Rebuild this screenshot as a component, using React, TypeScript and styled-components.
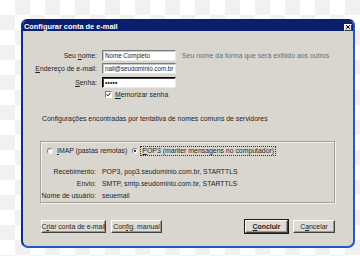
import React from 'react'
import styled, { createGlobalStyle } from 'styled-components'

const GlobalStyle = createGlobalStyle`
body {
  margin: 0;
  background-color: #ffffff;
  background-image: conic-gradient(#f1f1f1 25%, #ffffff 0 50%, #f1f1f1 0 75%, #ffffff 0);
  background-size: 30px 30px;
  font-family: "Liberation Sans", Arial, sans-serif;
}
#root {
  width: 360px;
  height: 256px;
  overflow: hidden;
}
`

const Page = styled.div`
width: 360px;
height: 256px;
padding: 19px 0 0 21px;
box-sizing: border-box;
`

const Window = styled.div`
width: 334px;
height: 229px;
box-sizing: border-box;
border: 2px solid #2358c8;
border-left-color: #0e2f86;
border-top-color: #0a1f6e;
border-radius: 6px 6px 7px 7px;
background: #d9d6cf;
display: flex;
flex-direction: column;
overflow: hidden;
`

const TitleBar = styled.div`
height: 10px;
background: #0a1f6e;
display: flex;
align-items: center;
justify-content: space-between;
padding: 0 1px 0 1px;
`

const Title = styled.span`
color: #ffffff;
font-weight: bold;
font-size: 7.4px;
`

const CloseButton = styled.div`
width: 8px;
height: 7px;
background: #d9d6cf;
border: 1px solid #ffffff;
border-right-color: #404040;
border-bottom-color: #404040;
box-sizing: border-box;
display: flex;
align-items: center;
justify-content: center;
margin-top: 2px;
`

const Body = styled.div`
flex: 1;
padding: 18.5px 18px 0 17px;
font-size: 6.9px;
color: #1e1e1e;
display: flex;
flex-direction: column;
`

const FormGrid = styled.div`
display: grid;
grid-template-columns: 57px 74px auto;
grid-template-rows: 11px 11px 11px 8px;
column-gap: 5px;
row-gap: 2.5px;
align-items: center;
`

const Label = styled.label`
display: flex;
justify-content: flex-end;
white-space: pre;
`

const Input = styled.div<{ focused?: boolean }>`
height: 11px;
box-sizing: border-box;
background: #ffffff;
border: 1px solid ${p => (p.focused ? '#000000' : '#7a7a7a')};
border-right-color: #e8e8e8;
border-bottom-color: #e8e8e8;
box-shadow: inset 1px 1px 0 ${p => (p.focused ? '#404040' : '#c8c8c8')};
padding: 0 1px 0 2px;
font-size: 6.3px;
letter-spacing: -0.05px;
display: flex;
align-items: center;
white-space: nowrap;
overflow: hidden;
`

const Dots = styled.span`
font-size: 6.5px;
letter-spacing: 0.2px;
font-weight: bold;
`

const Hint = styled.span`
color: #6c6c6c;
white-space: nowrap;
margin-left: 1px;
`

const CheckRow = styled.div`
grid-column: 2 / span 2;
display: flex;
align-items: center;
gap: 3px;
padding-left: 3px;
white-space: nowrap;
`

const CheckBox = styled.span`
width: 7px;
height: 7px;
box-sizing: border-box;
background: #ffffff;
border: 1px solid #7a7a7a;
border-right-color: #ffffff;
border-bottom-color: #ffffff;
display: flex;
align-items: center;
justify-content: center;
`

const Notice = styled.div`
margin: 17px 0 0 2px;
white-space: nowrap;
line-height: 8px;
`

const GroupBox = styled.div`
margin-top: 18px;
height: 62px;
box-sizing: border-box;
border: 1px solid #a3a09a;
box-shadow: inset 1px 1px 0 #f4f3f0, 1px 1px 0 #f4f3f0;
padding: 5px 0 0 6px;
display: flex;
flex-direction: column;
`

const RadioRow = styled.div`
display: flex;
align-items: center;
height: 8px;
white-space: nowrap;
`

const RadioOption = styled.div<{ focused?: boolean }>`
display: flex;
align-items: center;
gap: 3px;
margin-right: ${p => (p.focused ? '0' : '4px')};
`

const Radio = styled.span`
width: 6px;
height: 6px;
box-sizing: border-box;
border-radius: 50%;
background: #ffffff;
border: 1px solid #808080;
border-right-color: #f0f0f0;
border-bottom-color: #f0f0f0;
display: flex;
align-items: center;
justify-content: center;
`

const RadioDot = styled.span`
width: 2px;
height: 2px;
border-radius: 50%;
background: #000000;
`

const FocusText = styled.span<{ focused?: boolean }>`
padding: 0 1px;
outline: ${p => (p.focused ? '1px dotted #333333' : 'none')};
line-height: 8px;
`

const InfoGrid = styled.div`
margin-top: 10px;
margin-left: -6px;
display: grid;
grid-template-columns: 55px auto;
grid-auto-rows: 12px;
column-gap: 6px;
align-items: center;
white-space: nowrap;
`

const InfoLabel = styled.span`
display: flex;
justify-content: flex-end;
white-space: pre;
`

const ButtonRow = styled.div`
margin-top: 17px;
display: flex;
align-items: center;
padding-left: 1px;
`

const Spacer = styled.div`
flex: 1;
`

const Button = styled.button<{ primary?: boolean; w: number }>`
width: ${p => p.w}px;
height: 13px;
margin-left: ${p => (p.primary ? '0' : '5px')};
box-sizing: border-box;
background: #dedbd4;
font-family: "Liberation Sans", Arial, sans-serif;
font-size: 6.9px;
font-weight: ${p => (p.primary ? 'bold' : 'normal')};
color: #1e1e1e;
padding: 0;
border: 1px solid #ffffff;
border-right-color: #404040;
border-bottom-color: #404040;
box-shadow: ${p =>
  p.primary
    ? '0 0 0 1px #1a1a1a, inset -1px -1px 0 #9a9890'
    : 'inset -1px -1px 0 #9a9890'};
display: flex;
align-items: center;
justify-content: center;
white-space: pre;
&:first-child {
  margin-left: 0;
}
`

const U = styled.span`
text-decoration: underline;
text-underline-offset: 0.5px;
`

const Check = () => (
  <svg width="5" height="5" viewBox="0 0 5 5">
    <path d="M0.6 2.4 L1.9 3.8 L4.4 0.9" stroke="#000" strokeWidth="1" fill="none" />
  </svg>
)

const Cross = () => (
  <svg width="4" height="4" viewBox="0 0 4 4">
    <path d="M0.3 0.3 L3.7 3.7 M3.7 0.3 L0.3 3.7" stroke="#000" strokeWidth="1" />
  </svg>
)

function App() {
  return (
    <Page>
      <GlobalStyle />
      <Window>
        <TitleBar>
          <Title>Configurar conta de e-mail</Title>
          <CloseButton><Cross /></CloseButton>
        </TitleBar>
        <Body>
          <FormGrid>
            <Label><span>Seu <U>n</U>ome:</span></Label>
            <Input>Nome Completo</Input>
            <Hint>Seu nome da forma que será exibido aos outros</Hint>

            <Label><span><U>E</U>ndereço de e-mail:</span></Label>
            <Input>nail@seudominio.com.br</Input>
            <span />

            <Label><span><U>S</U>enha:</span></Label>
            <Input focused><Dots>•••••</Dots></Input>
            <span />

            <span />
            <CheckRow>
              <CheckBox><Check /></CheckBox>
              <span><U>M</U>emorizar senha</span>
            </CheckRow>
          </FormGrid>

          <Notice>Configurações encontradas por tentativa de nomes comuns de servidores</Notice>

          <GroupBox>
            <RadioRow>
              <RadioOption>
                <Radio />
                <FocusText><U>I</U>MAP (pastas remotas)</FocusText>
              </RadioOption>
              <RadioOption focused>
                <Radio><RadioDot /></Radio>
                <FocusText focused><U>P</U>OP3 (manter mensagens no computador)</FocusText>
              </RadioOption>
            </RadioRow>
            <InfoGrid>
              <InfoLabel><span>Recebimento:</span></InfoLabel>
              <span>POP3, pop3.seudominio.com.br, STARTTLS</span>
              <InfoLabel><span>Envio:</span></InfoLabel>
              <span>SMTP, smtp.seudominio.com.br, STARTTLS</span>
              <InfoLabel><span>Nome de usuário:</span></InfoLabel>
              <span>seuemail</span>
            </InfoGrid>
          </GroupBox>

          <ButtonRow>
            <Button w={65}><span>C<U>r</U>iar conta de e-mail</span></Button>
            <Button w={51}><span>Con<U>f</U>ig. manual</span></Button>
            <Spacer />
            <Button primary w={43}><span><U>C</U>oncluir</span></Button>
            <Button w={42}><span>C<U>a</U>ncelar</span></Button>
          </ButtonRow>
        </Body>
      </Window>
    </Page>
  )
}

export default App
